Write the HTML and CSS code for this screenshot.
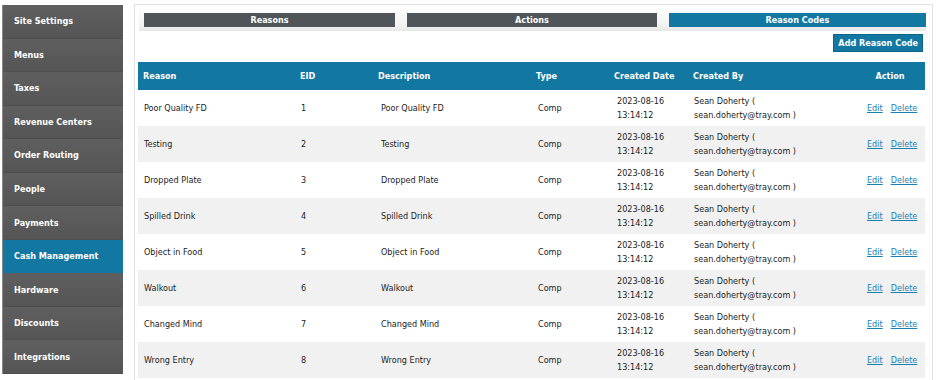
FILE: index.html
```html
<!DOCTYPE html>
<html lang="en">
<head>
    <meta charset="UTF-8">
    <title>Reason Codes</title>
    <link rel="stylesheet" href="styles.css">
</head>
<body>
    <div class="page">
        <ul class="side-nav">
            <li>Site Settings</li>
            <li>Menus</li>
            <li>Taxes</li>
            <li>Revenue Centers</li>
            <li>Order Routing</li>
            <li>People</li>
            <li>Payments</li>
            <li class="active">Cash Management</li>
            <li>Hardware</li>
            <li>Discounts</li>
            <li>Integrations</li>
        </ul>
        <div class="main-panel">
            <div class="tab-bar">
                <div class="tab tab-reasons">Reasons</div>
                <div class="tab tab-actions">Actions</div>
                <div class="tab tab-codes active">Reason Codes</div>
            </div>
            <div class="toolbar">
                <button class="add-btn">Add Reason Code</button>
            </div>
            <table class="reason-table">
                <thead>
                    <tr>
                        <th class="col-reason">Reason</th>
                        <th class="col-eid">EID</th>
                        <th class="col-desc">Description</th>
                        <th class="col-type">Type</th>
                        <th class="col-date">Created Date</th>
                        <th class="col-by">Created By</th>
                        <th class="col-action">Action</th>
                    </tr>
                </thead>
                <tbody id="reasonRows"></tbody>
            </table>
        </div>
    </div>
    <script>
    // Reason codes shown in the table
    const reasons = [
        ['Poor Quality FD', 1],
        ['Testing', 2],
        ['Dropped Plate', 3],
        ['Spilled Drink', 4],
        ['Object in Food', 5],
        ['Walkout', 6],
        ['Changed Mind', 7],
        ['Wrong Entry', 8]
    ];
    const rows = document.getElementById('reasonRows');
    reasons.forEach(function (r) {
        const tr = document.createElement('tr');
        tr.innerHTML =
            '<td>' + r[0] + '</td>' +
            '<td>' + r[1] + '</td>' +
            '<td class="pad-desc">' + r[0] + '</td>' +
            '<td class="pad-type">Comp</td>' +
            '<td class="pad-date">2023-08-16<br>13:14:12</td>' +
            '<td>Sean Doherty (<br>sean.doherty@tray.com )</td>' +
            '<td class="actions"><a href="#">Edit</a><a href="#">Delete</a></td>';
        rows.appendChild(tr);
    });
    </script>
</body>
</html>
```

FILE: styles.css
```css
* {
    box-sizing: border-box;
    margin: 0;
    padding: 0;
}

body {
    background-color: #ffffff;
    font-family: "DejaVu Sans Condensed", "DejaVu Sans", sans-serif;
    font-size: 9px;
    color: #222;
}

.page {
    display: flex;
    align-items: flex-start;
    padding: 4px 0 0 2px;
    height: 380px;
    overflow: hidden;
}

/* Left navigation */
.side-nav {
    list-style: none;
    width: 121px;
    flex-shrink: 0;
    height: 369px;
    margin-top: 1px;
    display: flex;
    flex-direction: column;
    border-left: 1px solid #8a8a8a;
}

.side-nav li {
    flex: 1;
    display: flex;
    align-items: center;
    padding-left: 11px;
    color: #fff;
    font-weight: bold;
    background: linear-gradient(#5f5f5f, #555555);
    border-bottom: 1px solid #4e4e4e;
}

.side-nav li.active {
    background: #1277a1;
    border-bottom-color: #1277a1;
}

/* Right panel */
.main-panel {
    margin-left: 11px;
    width: 799px;
    height: 376px;
    border: 1px solid #e2e2e2;
    border-bottom: none;
    padding: 4px 6px 0 3px;
}

.tab-bar {
    display: flex;
    gap: 12px;
    height: 22px;
    padding: 4px 0 4px 5px;
    margin-left: 1px;
    background: linear-gradient(#fcfcfc, #f3f3f3 70%, #e8e8e8);
}

.tab {
    background-color: #4f5558;
    color: #fff;
    font-weight: bold;
    text-align: center;
    line-height: 14px;
}

.tab-reasons { width: 251px; }
.tab-actions { width: 250px; }
.tab-codes { flex: 1; }

.tab.active {
    background-color: #1277a1;
}

.toolbar {
    display: flex;
    justify-content: flex-end;
    padding: 3px 3px 0 0;
}

.add-btn {
    height: 18px;
    padding: 0 4px;
    background-color: #1277a1;
    border: 1px solid #0d6688;
    color: #fff;
    font-family: inherit;
    font-size: 9px;
    font-weight: bold;
}

.reason-table {
    margin-top: 10px;
    width: 787px;
    border-collapse: collapse;
    table-layout: fixed;
}

.reason-table th {
    background-color: #1277a1;
    color: #fff;
    font-weight: bold;
    text-align: left;
    height: 28px;
    padding: 0 5px;
}

.reason-table td {
    height: 36px;
    padding: 0 6px;
    line-height: 14px;
    vertical-align: middle;
}

.reason-table tbody tr:nth-child(even) td {
    background-color: #f1f1f1;
}

.col-reason { width: 157px; }
.col-eid { width: 78px; }
.col-desc { width: 158px; }
.col-type { width: 78px; }
.col-date { width: 79px; }
.col-by { width: 167px; }
.col-action { width: 70px; }

.reason-table th.col-action {
    text-align: center;
}

.pad-desc,
.pad-date {
    padding-left: 8px !important;
}

.pad-type {
    padding-left: 7px !important;
}

.reason-table td.actions {
    text-align: center;
    white-space: nowrap;
    padding: 0 4px 0 8px;
}

.actions a {
    color: #1a80b3;
    text-decoration: underline;
    margin: 0 4px;
}
```
